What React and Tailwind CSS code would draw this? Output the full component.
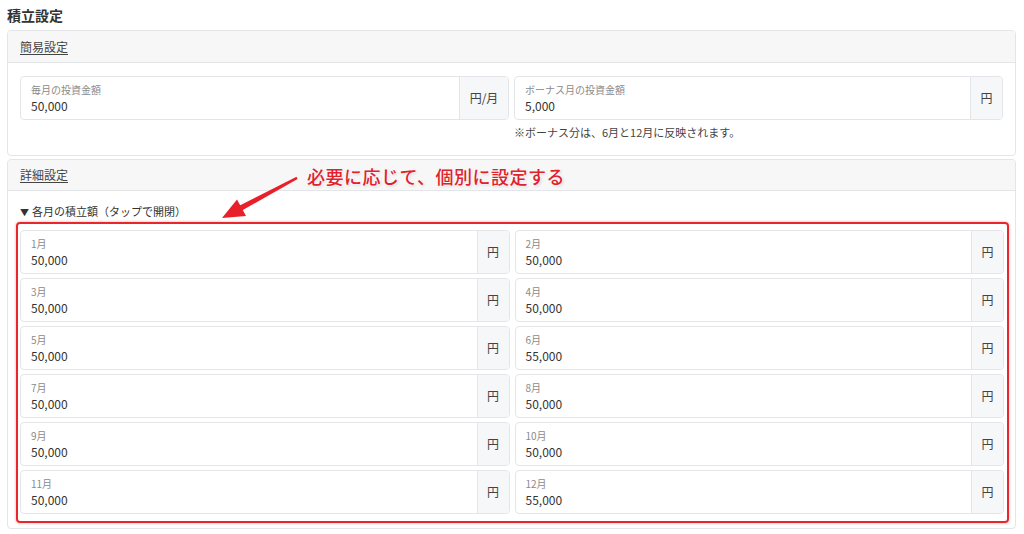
// App.jsx - 積立設定 screen

const months = [
  { m: "1月", v: "50,000" },
  { m: "2月", v: "50,000" },
  { m: "3月", v: "50,000" },
  { m: "4月", v: "50,000" },
  { m: "5月", v: "50,000" },
  { m: "6月", v: "55,000" },
  { m: "7月", v: "50,000" },
  { m: "8月", v: "50,000" },
  { m: "9月", v: "50,000" },
  { m: "10月", v: "50,000" },
  { m: "11月", v: "50,000" },
  { m: "12月", v: "55,000" },
];

// floating label input + unit addon
const AmountInput = ({ label, value, unit, unitWidth = "w-[32px]" }) => {
  return (
    <div className="flex h-[44px] rounded-[4px] border border-[#e3e5e8] bg-white overflow-hidden">
      <div className="flex-1 flex flex-col justify-center pl-[10px]">
        <span className="text-[10px] leading-[14px] text-[#8a8a8a]">{label}</span>
        <span className="text-[12px] leading-[17px] text-[#333]">{value}</span>
      </div>
      <div
        className={`${unitWidth} flex items-center justify-center border-l border-[#e3e5e8] bg-[#f6f7f8] text-[12px] text-[#444]`}
      >
        {unit}
      </div>
    </div>
  );
};

const CardHeader = ({ children, h = "h-[32px]" }) => (
  <div className={`${h} flex items-center px-[12px] bg-[#f7f7f8] border-b border-[#e3e5e8]`}>
    <span className="text-[12px] text-[#444] underline underline-offset-2">{children}</span>
  </div>
);

const App = () => {
  return (
    <div
      className="relative w-[1024px] h-[534px] bg-white px-[7px] pt-[5px] overflow-hidden"
      style={{ fontFamily: '"Noto Sans CJK JP", "Noto Sans", sans-serif' }}
    >
      <h2 className="text-[14px] leading-[20px] font-bold text-[#333] mb-[5px]">積立設定</h2>

      {/* 簡易設定 */}
      <div className="w-[1009px] rounded-[4px] border border-[#e3e5e8] overflow-hidden">
        <CardHeader>簡易設定</CardHeader>
        <div className="px-[12px] pt-[13px] pb-[15px] grid grid-cols-2 gap-x-[5px]">
          <AmountInput label="毎月の投資金額" value="50,000" unit="円/月" unitWidth="w-[49px]" />
          <div>
            <AmountInput label="ボーナス月の投資金額" value="5,000" unit="円" />
            <p className="mt-[4px] text-[11px] leading-[16px] text-[#444]">
              ※ボーナス分は、6月と12月に反映されます。
            </p>
          </div>
        </div>
      </div>

      {/* 詳細設定 */}
      <div className="mt-[3px] w-[1009px] rounded-[4px] border border-[#e3e5e8] overflow-hidden">
        <CardHeader h="h-[31px]">詳細設定</CardHeader>
        <div className="px-[8px] pt-[12px] pb-[5px]">
          <div className="pl-[4px] text-[11px] leading-[16px] text-[#333] mb-[1px]">
            <span className="text-[9px] mr-[3px]">▼</span>各月の積立額（タップで開閉）
          </div>
          <div className="w-[993px] rounded-[4px] border-2 border-[#e8272d] pl-[2px] pr-[3px] pt-[6px] pb-[7px] shadow-[0_0_3px_rgba(232,39,45,0.4)]">
            <div className="grid grid-cols-2 gap-x-[5px] gap-y-[4px]">
              {months.map((item) => (
                <AmountInput key={item.m} label={item.m} value={item.v} unit="円" />
              ))}
            </div>
          </div>
        </div>
      </div>

      {/* annotation over the 詳細設定 header */}
      <div
        className="absolute left-[307px] top-[163px] text-[18px] leading-[26px] font-medium text-[#e0222c] tracking-[0.5px]"
        style={{ textShadow: "0 0 3px #fff, 0 0 3px #fff, 1px 1px 3px rgba(0,0,0,0.2)" }}
      >
        必要に応じて、個別に設定する
      </div>
      <svg className="absolute left-0 top-0 pointer-events-none" width="1024" height="534">
        <polygon
          points="222,218 237,199.5 240.2,205.2 296.5,176.8 297.6,179 242.8,210 246,216"
          fill="#e8202a"
        />
      </svg>
    </div>
  );
};

export default App;
